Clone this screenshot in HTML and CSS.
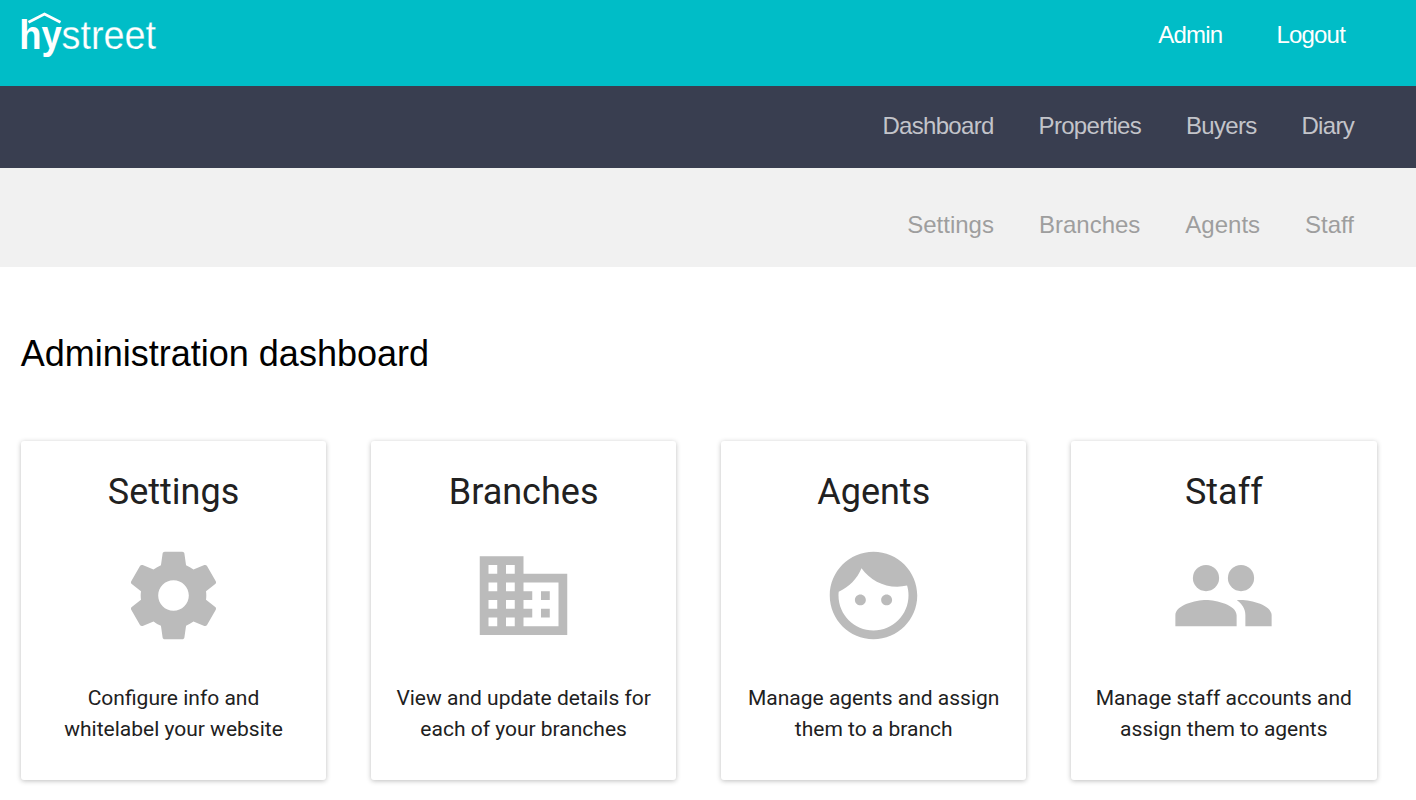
FILE: index.html
```html
<!DOCTYPE html>
<html lang="en">
<head>
<meta charset="utf-8">
<title>Administration dashboard</title>
<link rel="stylesheet" href="styles.css">
</head>
<body>
<header class="topbar">
  <svg class="logo" width="140" height="50" viewBox="0 0 140 50" role="img" aria-label="hystreet">
    <path d="M7.500 13.300 23.500 5 39.500 13.300" fill="none" stroke="#fff" stroke-width="2.800"/>
    <text class="logo-bold" x="-1.800" y="39.500" textLength="42.500" lengthAdjust="spacingAndGlyphs">hy</text>
    <text class="logo-light" x="40.500" y="39.500" textLength="94.500" lengthAdjust="spacingAndGlyphs">street</text>
  </svg>
  <nav class="account"><a>Admin</a><a>Logout</a></nav>
</header>
<nav class="mainnav"><a>Dashboard</a><a>Properties</a><a>Buyers</a><a>Diary</a></nav>
<nav class="subnav"><a>Settings</a><a>Branches</a><a>Agents</a><a>Staff</a></nav>
<main class="content">
  <h1 class="title">Administration dashboard</h1>
  <div class="cards">
    <section class="card">
      <h2 class="card-title">Settings</h2>
      <svg class="icon" viewBox="0 0 24 24"><path d="M19.43 12.98c.04-.32.07-.64.07-.98s-.03-.66-.07-.98l2.11-1.65c.19-.15.24-.42.12-.64l-2-3.46c-.12-.22-.39-.3-.61-.22l-2.49 1c-.52-.4-1.08-.73-1.69-.98l-.38-2.65C14.46 2.18 14.25 2 14 2h-4c-.25 0-.46.18-.49.42l-.38 2.65c-.61.25-1.17.59-1.69.98l-2.49-1c-.23-.09-.49 0-.61.22l-2 3.46c-.13.22-.07.49.12.64l2.11 1.65c-.04.32-.07.65-.07.98s.03.66.07.98l-2.11 1.65c-.19.15-.24.42-.12.64l2 3.46c.12.22.39.3.61.22l2.49-1c.52.4 1.08.73 1.69.98l.38 2.65c.03.24.24.42.49.42h4c.25 0 .46-.18.49-.42l.38-2.65c.61-.25 1.17-.59 1.69-.98l2.49 1c.23.09.49 0 .61-.22l2-3.46c.12-.22.07-.49-.12-.64l-2.11-1.65zM12 15.5c-1.93 0-3.5-1.57-3.5-3.5s1.57-3.5 3.5-3.5 3.5 1.57 3.5 3.5-1.57 3.5-3.5 3.5z"/></svg>
      <p class="card-text">Configure info and<br>whitelabel your website</p>
    </section>
    <section class="card">
      <h2 class="card-title">Branches</h2>
      <svg class="icon" viewBox="0 0 24 24"><path d="M12 7V3H2v18h20V7H12zM6 19H4v-2h2v2zm0-4H4v-2h2v2zm0-4H4V9h2v2zm0-4H4V5h2v2zm4 12H8v-2h2v2zm0-4H8v-2h2v2zm0-4H8V9h2v2zm0-4H8V5h2v2zm10 12h-8v-2h2v-2h-2v-2h2v-2h-2V9h8v10zm-2-8h-2v2h2v-2zm0 4h-2v2h2v-2z"/></svg>
      <p class="card-text">View and update details for<br>each of your branches</p>
    </section>
    <section class="card">
      <h2 class="card-title">Agents</h2>
      <svg class="icon" viewBox="0 0 24 24"><path d="M9 11.75c-.69 0-1.25.56-1.25 1.25s.56 1.25 1.25 1.25 1.25-.56 1.25-1.25-.56-1.25-1.25-1.25zm6 0c-.69 0-1.25.56-1.25 1.25s.56 1.25 1.25 1.25 1.25-.56 1.25-1.25-.56-1.25-1.25-1.25zM12 2C6.480 2 2 6.480 2 12s4.480 10 10 10 10-4.480 10-10S17.520 2 12 2zm0 18c-4.410 0-8-3.590-8-8 0-.29.02-.58.05-.86 2.360-1.050 4.230-2.980 5.210-5.370C11.070 8.330 14.050 10 17.420 10c.78 0 1.530-.09 2.250-.26.21.71.33 1.470.33 2.260 0 4.410-3.590 8-8 8z"/></svg>
      <p class="card-text">Manage agents and assign<br>them to a branch</p>
    </section>
    <section class="card">
      <h2 class="card-title">Staff</h2>
      <svg class="icon" viewBox="0 0 24 24"><circle cx="8" cy="8" r="3"/><circle cx="16" cy="8" r="3"/><path d="M8 13c-2.330 0-7 1.170-7 3.500V19h14v-2.500c0-2.330-4.670-3.500-7-3.500zm8 0c-.29 0-.62.02-.97.05 1.160.84 1.970 1.970 1.970 3.450V19h6v-2.500c0-2.330-4.670-3.500-7-3.500z"/></svg>
      <p class="card-text">Manage staff accounts and<br>assign them to agents</p>
    </section>
  </div>
</main>
</body>
</html>
```
FILE: styles.css
```css
* { box-sizing: border-box; }
body {
  margin: 0;
  height: 800px;
  overflow: hidden;
  background: #fff;
  font-family: "Liberation Sans", Arial, sans-serif;
}
.topbar {
  display: flex;
  justify-content: space-between;
  height: 86px;
  padding: 9px 71px 0 21px;
  background: #00bdc7;
}
.logo { display: block; fill: #fff; font-family: "Liberation Sans", Arial, sans-serif; font-size: 40px; overflow: visible; }
.logo-bold { font-weight: 700; }
.logo-light { font-weight: 400; stroke: #00bdc7; stroke-width: 0.25px; }
.account { display: flex; gap: 54px; color: #fff; font-size: 24px; line-height: 52px; letter-spacing: -0.8px; }
.mainnav, .subnav {
  display: flex;
  justify-content: flex-end;
  gap: 45px;
  padding-right: 62px;
  font-size: 24px;
}
.mainnav {
  height: 82px;
  line-height: 80px;
  background: #393e50;
  color: #c3c4ca;
  letter-spacing: -0.7px;
}
.subnav {
  height: 99px;
  line-height: 113px;
  background: #f1f1f1;
  color: #9e9e9e;
}
.content { padding: 63px 39.45px 0 20.75px; }
.title { margin: 0; font-size: 36px; font-weight: 400; line-height: 48px; color: #000; }
.cards { display: grid; grid-template-columns: repeat(4, 1fr); gap: 44.6px; margin-top: 63px; }
.card {
  display: flex;
  flex-direction: column;
  align-items: center;
  height: 339px;
  padding-top: 26px;
  border-radius: 3px;
  background: #fff;
  box-shadow: 0 1px 5px rgba(0, 0, 0, 0.26);
  color: #212121;
  font-family: Roboto, sans-serif;
  text-align: center;
}
.card-title { margin: 0; font-size: 36px; font-weight: 400; line-height: 50px; }
.icon { width: 105px; height: 105px; margin-top: 26px; fill: #bbb; }
.card-text { margin: 35px 0 0; font-size: 21px; line-height: 31px; white-space: nowrap; }
```
